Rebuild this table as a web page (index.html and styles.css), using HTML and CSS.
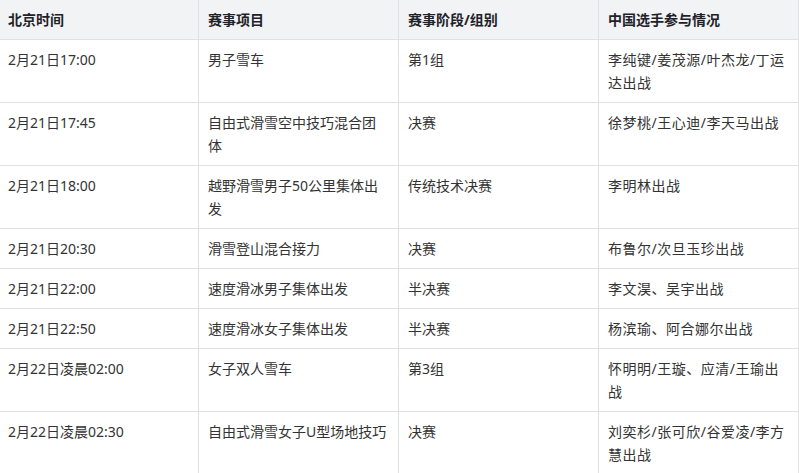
FILE: index.html
```html
<!DOCTYPE html>
<html lang="zh-CN">
<head>
<meta charset="utf-8">
<link rel="stylesheet" href="styles.css">
</head>
<body>
<table class="schedule">
  <thead>
    <tr><th>北京时间</th><th>赛事项目</th><th>赛事阶段/组别</th><th>中国选手参与情况</th></tr>
  </thead>
  <tbody>
    <tr><td>2月21日17:00</td><td>男子雪车</td><td>第1组</td><td class="players">李纯键/姜茂源/叶杰龙/丁运达出战</td></tr>
    <tr><td>2月21日17:45</td><td>自由式滑雪空中技巧混合团体</td><td>决赛</td><td class="players">徐梦桃/王心迪/李天马出战</td></tr>
    <tr><td>2月21日18:00</td><td>越野滑雪男子50公里集体出发</td><td>传统技术决赛</td><td class="players">李明林出战</td></tr>
    <tr><td>2月21日20:30</td><td>滑雪登山混合接力</td><td>决赛</td><td class="players">布鲁尔/次旦玉珍出战</td></tr>
    <tr><td>2月21日22:00</td><td>速度滑冰男子集体出发</td><td>半决赛</td><td class="players">李文淏、吴宇出战</td></tr>
    <tr><td>2月21日22:50</td><td>速度滑冰女子集体出发</td><td>半决赛</td><td class="players">杨滨瑜、阿合娜尔出战</td></tr>
    <tr><td>2月22日凌晨02:00</td><td>女子双人雪车</td><td>第3组</td><td class="players">怀明明/王璇、应清/王瑜出战</td></tr>
    <tr><td>2月22日凌晨02:30</td><td>自由式滑雪女子U型场地技巧</td><td>决赛</td><td class="players">刘奕杉/张可欣/谷爱凌/李方慧出战</td></tr>
  </tbody>
</table>
</body>
</html>
```

FILE: styles.css
```css
html, body {
  margin: 0;
  padding: 0;
  background: #ffffff;
  overflow: hidden;
}

.schedule {
  width: 800px;
  margin-left: -1px;
  border-collapse: separate;
  border-spacing: 0;
  table-layout: fixed;
  font-family: "Noto Sans", "Noto Sans CJK SC", sans-serif;
  font-size: 14px;
  line-height: 23px;
  color: #333333;
}

.schedule th,
.schedule td {
  width: 181px;
  padding: 8px 9px;
  border-right: 1px solid #dfe1e5;
  border-bottom: 1px solid #dfe1e5;
  text-align: left;
  vertical-align: top;
  word-break: break-all;
}

.schedule th {
  background: #f2f3f5;
  font-weight: bold;
  color: #1f2329;
}

.schedule .players {
  letter-spacing: 0.5px;
}
```
